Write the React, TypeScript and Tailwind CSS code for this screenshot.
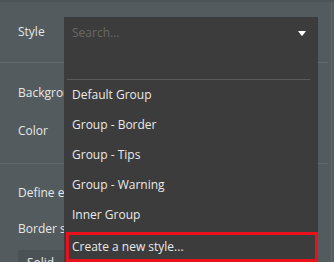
import React from "react";

const font = { fontFamily: '"Open Sans", "Noto Sans", sans-serif' };

export default function App() {
  const items = ["Default Group", "Group - Border", "Group - Tips", "Group - Warning", "Inner Group"];
  return (
    <div className="relative w-[334px] h-[262px] overflow-hidden bg-[#535b5e] text-[12px] leading-[18px] text-[#e6e8e8]" style={font}>
      <div className="h-[2px] bg-[#4c5457]" />
      <div className="flex flex-col border-r border-[#5d6669] mr-[2px] pr-[3px]">
        <div className="h-[60px] shrink-0 flex items-center pl-[18px]">Style</div>
        <div className="h-px shrink-0 bg-[#5f686b]" />
        <div className="h-[100px] shrink-0 flex flex-col pl-[18px]">
          <div className="mt-[21px] h-[18px] whitespace-nowrap">Background style</div>
          <div className="mt-[20px] h-[18px]">Color</div>
        </div>
        <div className="h-px shrink-0 bg-[#5f686b]" />
        <div className="flex flex-col shrink-0 pl-[18px]">
          <div className="mt-[20px] h-[18px] whitespace-nowrap">Define each border independently</div>
          <div className="mt-[18px] h-[18px] whitespace-nowrap">Border style</div>
          <div className="mt-[12px] w-[120px] h-[30px] bg-[#4b5255] pl-[9px] pt-[4px]">Solid</div>
        </div>
      </div>

      <div className="absolute left-[64px] top-[17px] w-[254px] h-[250px] bg-[#3c3c3c] flex flex-col">
        <div className="h-[32px] shrink-0 flex items-center justify-between pl-[8px] pr-[12px]">
          <span className="text-[#686868]">Search...</span>
          <svg width="8" height="5" viewBox="0 0 8 5">
            <path d="M0 0 H8 L4.6 4.4 Q4 5 3.4 4.4 Z" fill="#ffffff" />
          </svg>
        </div>
        <div className="h-[30px] shrink-0" />
        <div className="h-px shrink-0 bg-[#5a5a5a] ml-[3px] mr-[8px]" />
        {items.map((t) => (
          <div key={t} className="h-[30px] shrink-0 flex items-center pl-[8px] text-[#eaeaea]">
            {t}
          </div>
        ))}
        <div className="ml-[2px] mt-[2px] shrink-0 w-[252px] h-[30px] border-[3px] border-[#e8111c] flex items-center pl-[3px] text-[#eaeaea]">
          Create a new style...
        </div>
      </div>
    </div>
  );
}
